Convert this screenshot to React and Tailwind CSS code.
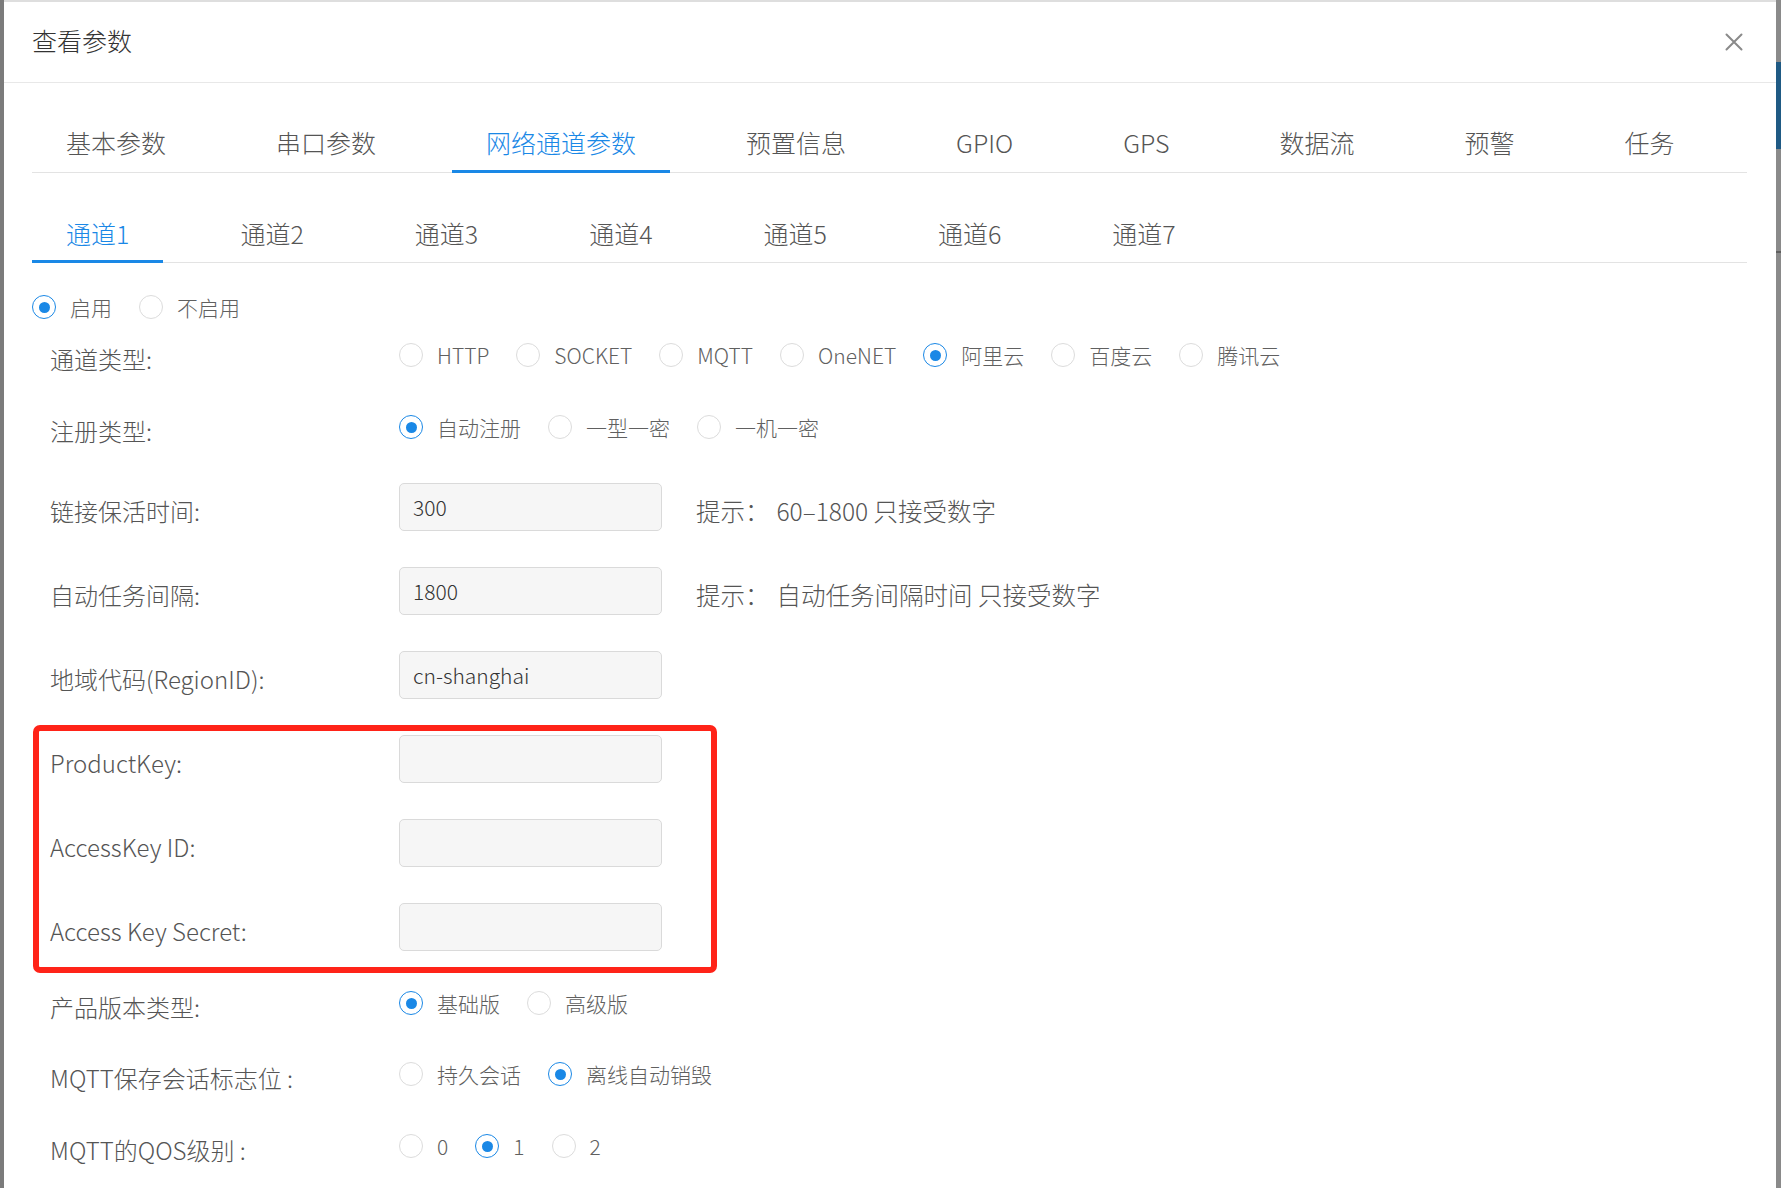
const mainTabs = ['基本参数', '串口参数', '网络通道参数', '预置信息', 'GPIO', 'GPS', '数据流', '预警', '任务'];
const channels = ['通道1', '通道2', '通道3', '通道4', '通道5', '通道6', '通道7'];

function Radio({ checked, label }) {
  return (
    <label className="flex items-center gap-[14px]">
      <span
        className={`w-[24px] h-[24px] shrink-0 rounded-full border-[1.5px] flex items-center justify-center ${
          checked ? 'border-[#1a88e6]' : 'border-[#dcdcdc]'
        }`}
      >
        {checked && <span className="w-[11px] h-[11px] rounded-full bg-[#1a88e6]" />}
      </span>
      <span className="text-[21px] leading-none text-[#606060] whitespace-nowrap">{label}</span>
    </label>
  );
}

function RadioGroup({ options, value }) {
  return (
    <div className="flex items-center gap-[27px]">
      {options.map((o) => (
        <Radio key={o} label={o} checked={o === value} />
      ))}
    </div>
  );
}

function Field({ value }) {
  return (
    <input
      readOnly
      value={value}
      className="w-[263px] h-[48px] shrink-0 rounded-[5px] border border-[#dadada] bg-[#f6f6f6] px-[13px] text-[21px] text-[#333] outline-none"
    />
  );
}

function Hint({ children }) {
  return (
    <span className="ml-[34px] pt-[8px] text-[24.5px] leading-none text-[#555] whitespace-nowrap">
      提示：<span className="ml-[7px]">{children}</span>
    </span>
  );
}

function Row({ label, boxed, className = '', children }) {
  return (
    <div className={`flex items-center h-[48px] ${className}`}>
      <div
        className={`${
          boxed ? 'w-[360px] pl-[11px]' : 'w-[367px] pl-[18px]'
        } shrink-0 pt-[8px] text-[24px] leading-none text-[#555] whitespace-nowrap`}
      >
        {label}
      </div>
      {children}
    </div>
  );
}

function Tabs({ items, active, height, gap }) {
  return (
    <div className={`flex ${gap} border-b border-[#e3e3e3]`}>
      {items.map((t) => (
        <div
          key={t}
          className={`${height} flex items-center px-[34px] pb-[4px] border-b-[3px] -mb-[1px] text-[25px] leading-none whitespace-nowrap ${
            t === active ? 'border-[#1a88e6] text-[#1a88e6]' : 'border-transparent text-[#555]'
          }`}
        >
          {t}
        </div>
      ))}
    </div>
  );
}

export default function App() {
  return (
    <div className="w-[1781px] h-[1188px] overflow-hidden flex bg-[#838383] font-['Noto_Sans_CJK_SC','Liberation_Sans',sans-serif] font-light">
      <div className="w-[4px] shrink-0 bg-[#7b7b7b]" />
      <div className="flex-1 bg-white border-t-2 border-[#dedede] flex flex-col">
        {/* header */}
        <div className="h-[81px] shrink-0 flex items-center justify-between pl-[28px] pr-[33px] border-b border-[#e8e8e8]">
          <span className="mb-[4px] text-[25px] leading-none text-[#333]">查看参数</span>
          <svg width="18" height="18" viewBox="0 0 18 18" className="mb-[1px] text-[#8a8a8a]">
            <path d="M1.5 1.5 16.5 16.5M16.5 1.5 1.5 16.5" stroke="currentColor" strokeWidth="2" strokeLinecap="round" />
          </svg>
        </div>

        <div className="pl-[28px] pr-[29px]">
          <div className="mt-[35px]">
            <Tabs items={mainTabs} active="网络通道参数" height="h-[55px]" gap="gap-[42px]" />
          </div>
          <div className="mt-[37px]">
            <Tabs items={channels} active="通道1" height="h-[53px]" gap="gap-[43px]" />
          </div>

          {/* form */}
          <div className="mt-[20px] flex flex-col">
            <div className="h-[48px] flex items-center">
              <RadioGroup options={['启用', '不启用']} value="启用" />
            </div>

            <Row label="通道类型:">
              <RadioGroup
                options={['HTTP', 'SOCKET', 'MQTT', 'OneNET', '阿里云', '百度云', '腾讯云']}
                value="阿里云"
              />
            </Row>

            <Row label="注册类型:" className="mt-[24px]">
              <RadioGroup options={['自动注册', '一型一密', '一机一密']} value="自动注册" />
            </Row>

            <Row label="链接保活时间:" className="mt-[32px]">
              <Field value="300" />
              <Hint>60–1800 只接受数字</Hint>
            </Row>

            <Row label="自动任务间隔:" className="mt-[36px]">
              <Field value="1800" />
              <Hint>自动任务间隔时间 只接受数字</Hint>
            </Row>

            <Row label="地域代码(RegionID):" className="mt-[36px]">
              <Field value="cn-shanghai" />
            </Row>

            <div className="mt-[26px] ml-[1px] w-[684px] border-[6px] border-[#ff2318] rounded-[7px] pt-[4px] pb-[16px]">
              <Row label="ProductKey:" boxed>
                <Field value="" />
              </Row>
              <Row label="AccessKey ID:" boxed className="mt-[36px]">
                <Field value="" />
              </Row>
              <Row label="Access Key Secret:" boxed className="mt-[36px]">
                <Field value="" />
              </Row>
            </div>

            <Row label="产品版本类型:" className="mt-[6px]">
              <RadioGroup options={['基础版', '高级版']} value="基础版" />
            </Row>

            <Row label="MQTT保存会话标志位 :" className="mt-[23px]">
              <RadioGroup options={['持久会话', '离线自动销毁']} value="离线自动销毁" />
            </Row>

            <Row label="MQTT的QOS级别 :" className="mt-[24px]">
              <RadioGroup options={['0', '1', '2']} value="1" />
            </Row>
          </div>
        </div>
      </div>
      <div className="w-[5px] shrink-0 flex flex-col">
        <div className="h-[62px] bg-[#8a8a8a]" />
        <div className="h-[87px] bg-[#1f5a84]" />
        <div className="h-[102px] bg-[#8a8a8a]" />
        <div className="h-[2px] bg-[#5f5f5f]" />
        <div className="flex-1 bg-[#8a8a8a]" />
      </div>
    </div>
  );
}
